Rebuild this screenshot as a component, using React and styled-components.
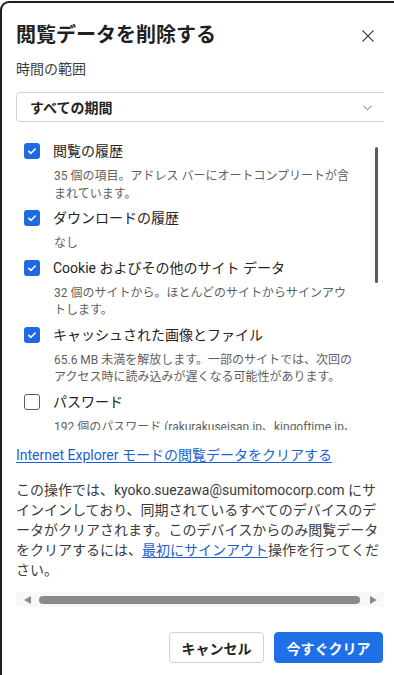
import React from "react";
import styled, { createGlobalStyle } from "styled-components";

const GlobalStyle = createGlobalStyle`
  html, body {
    margin: 0;
    padding: 0;
    background: #ffffff;
  }
  body {
    padding-top: 1px;
    font-family: Roboto, "Noto Sans CJK JP", sans-serif;
    color: #242424;
  }
  * { box-sizing: border-box; }
`;

const Frame = styled.div`
  width: 394px;
  height: 674px;
  border-top: 2px solid #1e1e1e;
  border-left: 2px solid #1e1e1e;
  border-top-left-radius: 9px;
  background: #ffffff;
  overflow: hidden;
  padding: 18px 0 0 14px;
`;

const Dialog = styled.div`
  width: 368px;
  display: flex;
  flex-direction: column;
`;

const Header = styled.div`
  display: flex;
  align-items: center;
  justify-content: space-between;
  height: 28px;
`;

const Title = styled.h1`
  margin: 0;
  font-size: 20px;
  line-height: 28px;
  font-weight: 700;
  color: #1f1f1f;
`;

const CloseButton = styled.button`
  width: 32px;
  height: 28px;
  border: 0;
  background: transparent;
  padding: 0;
  display: flex;
  align-items: center;
  justify-content: center;
  margin-top: 1px;
`;

const Body = styled.div`
  width: 368px;
  overflow: hidden;
  display: flex;
  flex-direction: column;
`;

const FieldLabel = styled.div`
  margin-top: 10px;
  font-size: 14px;
  line-height: 20px;
  color: #3d3d3d;
`;

const Select = styled.div`
  margin-top: 13px;
  width: 380px;
  height: 30px;
  border: 1px solid #d1d1d1;
  border-radius: 4px;
  display: flex;
  align-items: center;
  padding-left: 13px;
  font-size: 14px;
  font-weight: 700;
  color: #242424;
  position: relative;
`;

const Chevron = styled.svg`
  position: absolute;
  left: 346px;
  top: 12px;
`;

const ScrollArea = styled.div`
  position: relative;
  margin-top: 10px;
  height: 298px;
  overflow: hidden;
  padding: 9px 0 0 8px;
`;

const ScrollThumb = styled.div`
  position: absolute;
  right: 6px;
  top: 15px;
  width: 3px;
  height: 136px;
  border-radius: 2px;
  background: #5c5c5c;
`;

const List = styled.div`
  display: flex;
  flex-direction: column;
  gap: 5px;
`;

const Item = styled.div`
  display: grid;
  grid-template-columns: 16px 1fr;
  column-gap: 13px;
  row-gap: 7px;
  align-items: center;
`;

const Box = styled.span`
  width: 16px;
  height: 16px;
  border-radius: 3px;
  display: flex;
  align-items: center;
  justify-content: center;
  background: ${(p) => (p.$checked ? "#1f69e2" : "#ffffff")};
  border: ${(p) => (p.$checked ? "none" : "1.5px solid #5c5c5c")};
`;

const ItemLabel = styled.span`
  font-size: 14px;
  line-height: 20px;
  color: #242424;
`;

const ItemDesc = styled.div`
  grid-column: 2;
  width: 303px;
  padding-left: 1px;
  font-size: 12px;
  line-height: 17.5px;
  color: #5f5f5f;
`;

const Link = styled.a`
  color: #1c5fcf;
  text-decoration: underline;
  text-underline-offset: 2px;
  cursor: pointer;
`;

const LinkLine = styled.div`
  margin-top: 15px;
  font-size: 14px;
  line-height: 20px;
`;

const Paragraph = styled.p`
  margin: 15px 0 0;
  font-size: 14px;
  line-height: 20px;
  color: #3b3b3b;
`;

const HScroll = styled.div`
  margin-top: 12px;
  height: 15px;
  background: #f8f8f8;
  display: flex;
  align-items: center;
  padding: 0 7px 0 8px;
  gap: 8px;
`;

const Arrow = styled.span`
  width: 0;
  height: 0;
  border-top: 4px solid transparent;
  border-bottom: 4px solid transparent;
  ${(p) =>
    p.$dir === "left"
      ? "border-right: 7px solid #8a8a8a;"
      : "border-left: 7px solid #8a8a8a; margin-left: 2px;"}
`;

const HThumb = styled.span`
  flex: 1;
  height: 8px;
  border-radius: 4px;
  background: #8a8a8a;
`;

const Footer = styled.div`
  margin-top: 25px;
  display: flex;
  justify-content: flex-end;
  gap: 9px;
`;

const Button = styled.button`
  height: 31px;
  padding: 0 11.5px;
  border-radius: 4px;
  border: 1px solid ${(p) => (p.$primary ? "#1f6fe6" : "#d1d1d1")};
  background: ${(p) => (p.$primary ? "#1f6fe6" : "#ffffff")};
  color: ${(p) => (p.$primary ? "#ffffff" : "#242424")};
  font-family: Roboto, "Noto Sans CJK JP", sans-serif;
  font-size: 14px;
  font-weight: 700;
  margin-right: 1px;
`;

const items = [
  {
    label: "閲覧の履歴",
    desc: "35 個の項目。アドレス バーにオートコンプリートが含まれています。",
    checked: true,
  },
  { label: "ダウンロードの履歴", desc: "なし", checked: true },
  {
    label: "Cookie およびその他のサイト データ",
    desc: "32 個のサイトから。ほとんどのサイトからサインアウトします。",
    checked: true,
  },
  {
    label: "キャッシュされた画像とファイル",
    desc: "65.6 MB 未満を解放します。一部のサイトでは、次回のアクセス時に読み込みが遅くなる可能性があります。",
    checked: true,
  },
  {
    label: "パスワード",
    desc: "192 個のパスワード (rakurakuseisan.jp、kingoftime.jp、他 190 個)",
    checked: false,
  },
];

const Check = () => (
  <svg width="16" height="16" viewBox="0 0 16 16">
    <path
      d="M4.8 8.3 L7 10.3 L11.2 6"
      fill="none"
      stroke="#ffffff"
      strokeWidth="1.6"
      strokeLinecap="round"
      strokeLinejoin="round"
    />
  </svg>
);

export default function App() {
  return (
    <>
      <GlobalStyle />
      <Frame lang="ja">
        <Dialog>
          <Header>
            <Title>閲覧データを削除する</Title>
            <CloseButton aria-label="閉じる">
              <svg width="12" height="12" viewBox="0 0 12 12">
                <path
                  d="M0.5 0.5 L11.5 11.5 M11.5 0.5 L0.5 11.5"
                  stroke="#424242"
                  strokeWidth="1.1"
                  fill="none"
                />
              </svg>
            </CloseButton>
          </Header>
          <Body>
            <FieldLabel>時間の範囲</FieldLabel>
            <Select>
              すべての期間
              <Chevron width="9" height="6" viewBox="0 0 9 6">
                <path d="M0.5 0.8 L4.5 4.8 L8.5 0.8" fill="none" stroke="#616161" strokeWidth="1" />
              </Chevron>
            </Select>
            <ScrollArea>
              <List>
                {items.map((it) => (
                  <Item key={it.label}>
                    <Box $checked={it.checked}>{it.checked && <Check />}</Box>
                    <ItemLabel>{it.label}</ItemLabel>
                    <ItemDesc>{it.desc}</ItemDesc>
                  </Item>
                ))}
              </List>
              <ScrollThumb />
            </ScrollArea>
            <LinkLine>
              <Link>Internet Explorer モードの閲覧データをクリアする</Link>
            </LinkLine>
            <Paragraph>
              この操作では、kyoko.suezawa@sumitomocorp.com にサインインしており、同期されているすべてのデバイスのデータがクリアされます。このデバイスからのみ閲覧データをクリアするには、<Link>最初にサインアウト</Link>操作を行ってください。
            </Paragraph>
            <HScroll>
              <Arrow $dir="left" />
              <HThumb />
              <Arrow $dir="right" />
            </HScroll>
          </Body>
          <Footer>
            <Button>キャンセル</Button>
            <Button $primary>今すぐクリア</Button>
          </Footer>
        </Dialog>
      </Frame>
    </>
  );
}
